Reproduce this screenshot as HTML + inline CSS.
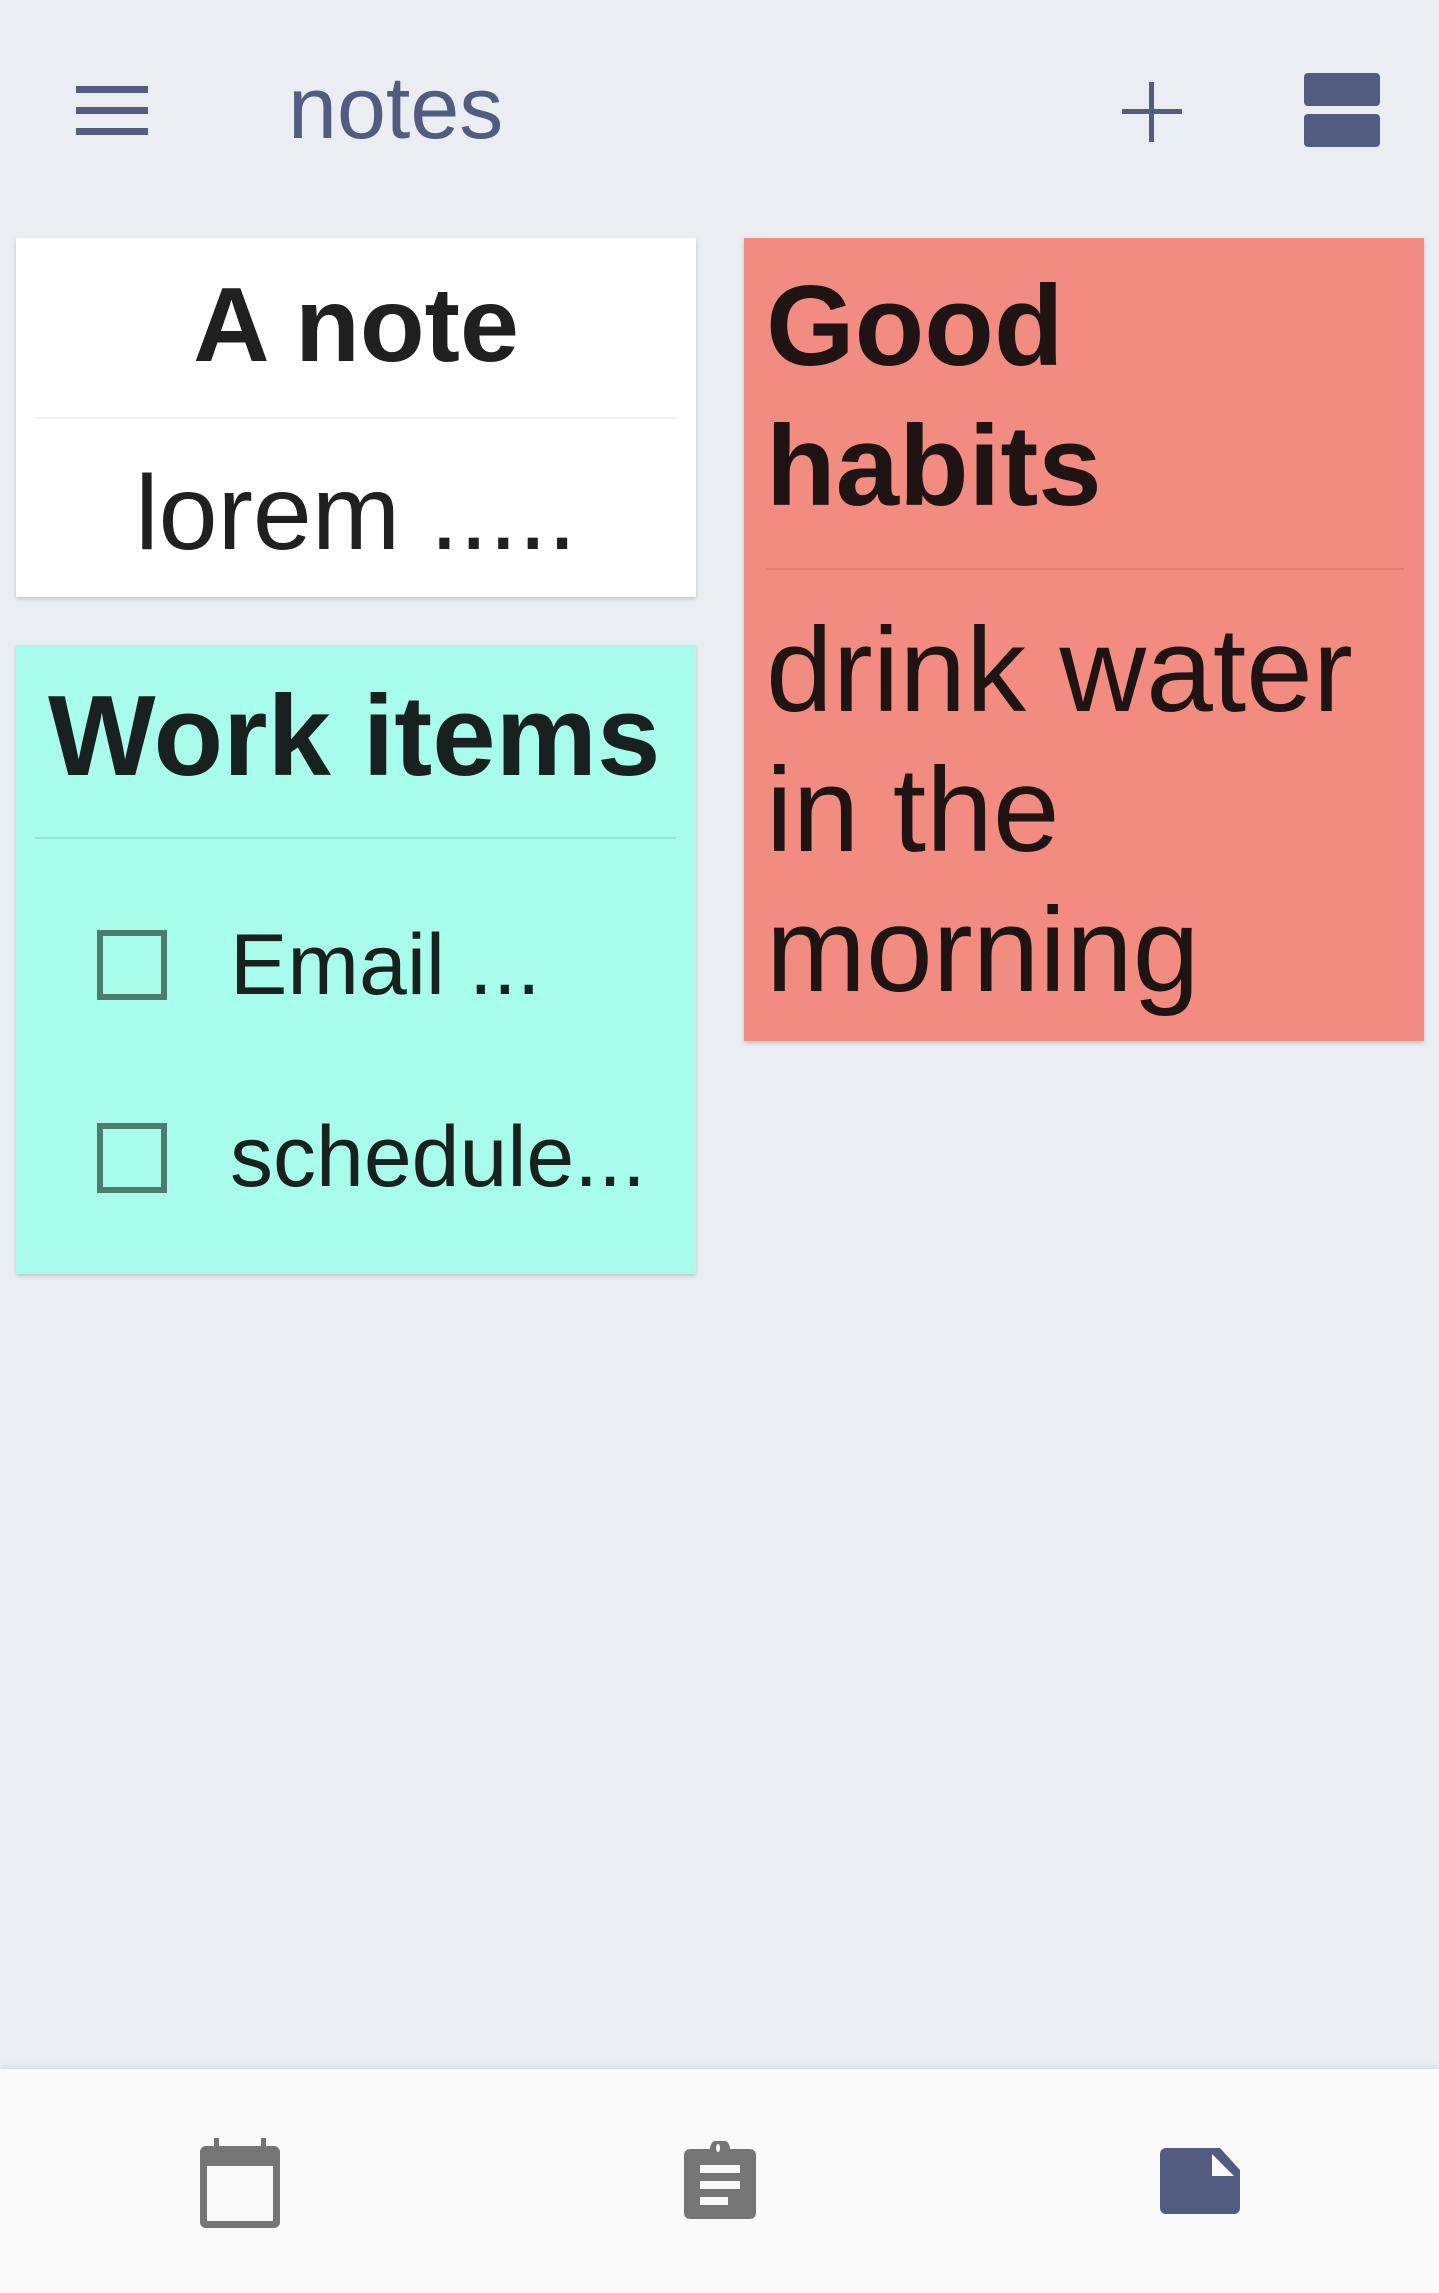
<!DOCTYPE html>
<html><head><meta charset="utf-8"><style>
*{margin:0;padding:0;box-sizing:border-box}
body{width:1439px;height:2293px;background:#eaeef2;font-family:"Liberation Sans",sans-serif;position:relative;overflow:hidden;color:#202020}
.abs{position:absolute}
.card{position:absolute;box-shadow:0 2px 4px rgba(0,0,0,0.18)}
.div{position:absolute;height:2px}
.t{position:absolute;white-space:nowrap;line-height:1}
</style></head><body>
<svg class="abs" style="left:76px;top:86px" width="74" height="50"><g fill="#525c80"><rect x="0" y="0" width="72" height="7"/><rect x="0" y="21" width="72" height="7"/><rect x="0" y="42" width="72" height="7"/></g></svg>
<div class="t" style="left:288px;top:64px;font-size:88px;color:#525c80">notes</div>
<svg class="abs" style="left:1122px;top:82px" width="60" height="60"><g fill="#525c80"><rect x="27" y="0" width="5" height="60"/><rect x="0" y="27" width="60" height="5"/></g></svg>
<svg class="abs" style="left:1304px;top:73px" width="76" height="74"><g fill="#525c80"><rect x="0" y="0" width="76" height="33" rx="4"/><rect x="0" y="41" width="76" height="33" rx="4"/></g></svg>

<div class="card" style="left:16px;top:238px;width:680px;height:359px;background:#fff"></div>
<div class="t" style="left:16px;width:680px;text-align:center;top:272px;font-size:106px;font-weight:bold">A note</div>
<div class="div" style="left:35px;top:417px;width:641px;background:#eeeff1"></div>
<div class="t" style="left:16px;width:680px;text-align:center;top:460px;font-size:106px">lorem .....</div>

<div class="card" style="left:16px;top:645px;width:680px;height:629px;background:#a7fde9"></div>
<div class="t" style="left:48px;top:680px;font-size:114px;font-weight:bold;color:#18211f">Work items</div>
<div class="div" style="left:35px;top:837px;width:641px;background:#95e6d3"></div>
<div class="abs" style="left:97px;top:930px;width:70px;height:70px;border:6px solid #4f7a70"></div>
<div class="t" style="left:230px;top:922px;font-size:86px;color:#18211f">Email ...</div>
<div class="abs" style="left:97px;top:1123px;width:70px;height:70px;border:6px solid #4f7a70"></div>
<div class="t" style="left:230px;top:1114px;font-size:86px;color:#18211f">schedule...</div>

<div class="card" style="left:744px;top:238px;width:680px;height:803px;background:#f28b80"></div>
<div class="t" style="left:766px;font-size:114px;font-weight:bold;color:#1f1413;line-height:140px;top:257px">Good<br>habits</div>
<div class="div" style="left:766px;top:568px;width:638px;background:#e37e74"></div>
<div class="t" style="left:766px;top:600px;font-size:120px;color:#1f1413;line-height:140px">drink water<br>in the<br>morning</div>

<div class="abs" style="left:0;top:2069px;width:1439px;height:224px;background:#fafafa;box-shadow:0 -2px 6px rgba(0,0,0,0.08)"></div>
<svg class="abs" style="left:200px;top:2138px" width="80" height="90"><g fill="#757575"><rect x="14" y="0" width="5" height="12"/><rect x="61" y="0" width="5" height="12"/><path d="M6 8h68a6 6 0 0 1 6 6v70a6 6 0 0 1-6 6H6a6 6 0 0 1-6-6V14a6 6 0 0 1 6-6zM7 28v55h66V28z" fill-rule="evenodd"/></g></svg>
<svg class="abs" style="left:684px;top:2141px" width="72" height="78"><path fill="#757575" fill-rule="evenodd" d="M6 8h20a10 10 0 0 1 20 0h20a6 6 0 0 1 6 6v58a6 6 0 0 1-6 6H6a6 6 0 0 1-6-6V14a6 6 0 0 1 6-6zM34 3a2 4 0 1 0 .1 0zM16 24h40v8H16zM16 40h40v8H16zM16 56h28v8H16z"/></svg>
<svg class="abs" style="left:1160px;top:2148px" width="80" height="66"><path fill="#525c80" fill-rule="evenodd" d="M6 0h54l20 22v38a6 6 0 0 1-6 6H6a6 6 0 0 1-6-6V6a6 6 0 0 1 6-6zM52 6v22h22z"/></svg>
</body></html>
